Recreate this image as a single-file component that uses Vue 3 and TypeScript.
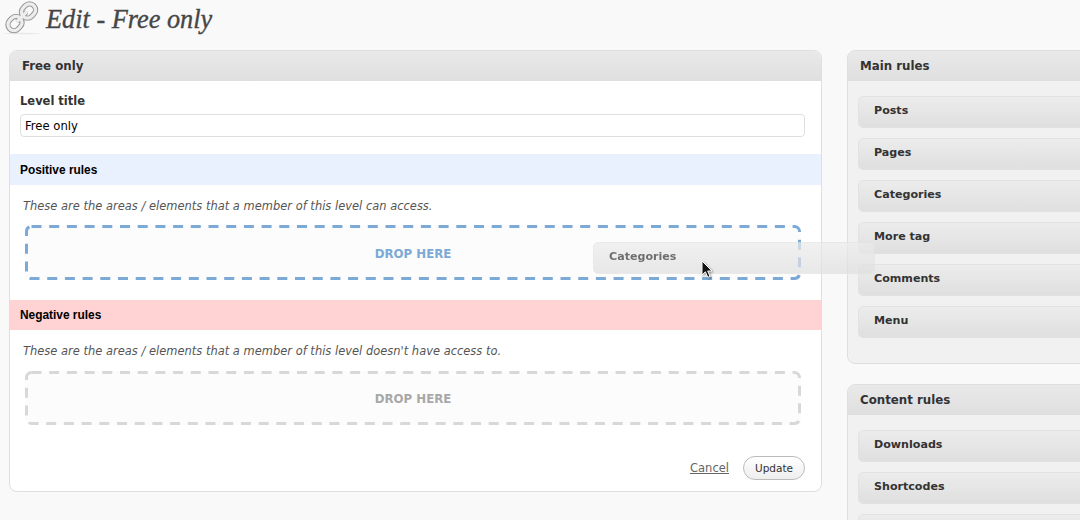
<script setup lang="ts">
interface RuleGroup {
  title: string
  rules: string[]
}

// the last content rule sits below the fold, only its top edge shows
const groups: RuleGroup[] = [
  { title: 'Main rules', rules: ['Posts', 'Pages', 'Categories', 'More tag', 'Comments', 'Menu'] },
  { title: 'Content rules', rules: ['Downloads', 'Shortcodes', ''] }
]
</script>

<template>
  <div class="page">
    <header class="page-title">
      <svg class="title-icon" width="42" height="36" viewBox="0 0 42 36" aria-hidden="true">
        <ellipse cx="18" cy="33.5" rx="18" ry="0.8" fill="#e8e8e8" />
        <g fill="none">
          <g stroke="#9a9a9a" stroke-width="5.4">
            <rect x="3.5" y="17.5" width="15" height="12" rx="6" transform="rotate(-45 11 23.5)" />
            <rect x="17" y="5" width="15" height="12" rx="6" transform="rotate(-45 24.5 11)" />
            <path d="M14.5 20 L21 13.5" stroke-linecap="round" />
          </g>
          <g stroke="#ededed" stroke-width="3.2">
            <rect x="3.5" y="17.5" width="15" height="12" rx="6" transform="rotate(-45 11 23.5)" />
            <rect x="17" y="5" width="15" height="12" rx="6" transform="rotate(-45 24.5 11)" />
            <path d="M13.5 21 L22 12.5" stroke-linecap="round" />
          </g>
        </g>
      </svg>
      <h1>Edit - Free only</h1>
    </header>

    <div class="columns">
      <main class="panel editor">
        <h2 class="panel-head">Free only</h2>

        <div class="title-field">
          <label for="level-title">Level title</label>
          <input id="level-title" type="text" value="Free only" />
        </div>

        <h3 class="rule-band positive">Positive rules</h3>
        <p class="hint">These are the areas / elements that a member of this level can access.</p>
        <div class="drop active">
          <svg class="dash" width="776" height="55" aria-hidden="true">
            <rect x="1.5" y="1.5" width="773" height="52" rx="5" />
          </svg>
          DROP HERE
        </div>

        <h3 class="rule-band negative">Negative rules</h3>
        <p class="hint">These are the areas / elements that a member of this level doesn't have access to.</p>
        <div class="drop second">
          <svg class="dash" width="776" height="54" aria-hidden="true">
            <rect x="1.5" y="1.5" width="773" height="51" rx="5" />
          </svg>
          DROP HERE
        </div>

        <div class="actions">
          <a href="#" class="cancel">Cancel</a>
          <button type="button" class="update">Update</button>
        </div>
      </main>

      <aside class="sidebar">
        <section v-for="group in groups" :key="group.title" class="panel side-panel">
          <h2 class="panel-head">{{ group.title }}</h2>
          <ul class="rule-list">
            <li v-for="rule in group.rules" :key="rule" class="rule-item">{{ rule }}</li>
          </ul>
        </section>
      </aside>
    </div>

    <!-- item being dragged -->
    <div class="dragged">Categories</div>
    <svg class="cursor" width="14" height="20" viewBox="0 0 14 20" aria-hidden="true">
      <path d="M1 1 L1 15 L4.4 11.8 L6.8 17.4 L9 16.4 L6.7 11 L11 11 Z" fill="#111" stroke="#fff" stroke-width="1" />
    </svg>
  </div>
</template>

<style>
html,
body {
  margin: 0;
  background: #f9f9f9;
  overflow: hidden;
}
</style>

<style scoped>
.page {
  position: relative;
  width: 1080px;
  height: 520px;
  overflow: hidden;
  background: #f9f9f9;
  font-family: "DejaVu Sans", "Liberation Sans", sans-serif;
  color: #333;
}

.page-title {
  display: flex;
  align-items: flex-start;
  height: 50px;
  padding-left: 4px;
  box-sizing: border-box;
}

h1 {
  margin: 0;
  padding-top: 5px;
  font: italic 400 26.3px/30px "Liberation Serif", serif;
  color: #464646;
  -webkit-text-stroke: 0.35px #464646;
}

.columns {
  display: flex;
  align-items: flex-start;
  gap: 25px;
  padding-left: 9px;
}

.panel {
  box-sizing: border-box;
  border: 1px solid #dfdfdf;
  border-radius: 8px;
  overflow: hidden;
}

.panel-head {
  margin: 0;
  height: 30px;
  padding-left: 12px;
  font-size: 11.8px;
  font-weight: 700;
  line-height: 30px;
  color: #333;
  background: linear-gradient(#e9e9e9, #dfdfdf);
}

.editor {
  flex: none;
  width: 813px;
  height: 442px;
  background: #fff;
}

.title-field {
  padding: 13px 16px 0 10px;
  height: 73px;
  box-sizing: border-box;
}

.title-field label {
  display: block;
  font-size: 11.5px;
  font-weight: 700;
  line-height: 14px;
  color: #333;
}

.title-field input {
  display: block;
  box-sizing: border-box;
  width: 100%;
  height: 23px;
  margin-top: 6px;
  padding: 1px 4px 0;
  border: 1px solid #dfdfdf;
  border-radius: 4px;
  font: 11.6px "DejaVu Sans", sans-serif;
  color: #000;
  background: #fff;
  outline: none;
}

.rule-band {
  margin: 0;
  height: 31px;
  padding-left: 10px;
  font: 700 11.9px/32px "Liberation Sans", sans-serif;
  color: #000;
}

.positive {
  background: #e9f0fe;
}

.negative {
  height: 30px;
  line-height: 31px;
  background: #ffd3d3;
}

.hint {
  margin: 0;
  padding: 14px 0 0 13px;
  font-size: 11.45px;
  font-style: italic;
  line-height: 15px;
  letter-spacing: 0.02px;
  color: #555;
}

.drop {
  position: relative;
  box-sizing: border-box;
  width: 776px;
  height: 55px;
  margin: 11px 0 20px 15px;
  border-radius: 6px;
  font-size: 11.8px;
  font-weight: 700;
  line-height: 58px;
  text-align: center;
  color: #a8a8a8;
  background: #fcfcfc;
}

.drop.second {
  height: 54px;
  margin-top: 12px;
  line-height: 57px;
}

.dash {
  position: absolute;
  left: 0;
  top: 0;
}

.dash rect {
  fill: none;
  stroke: #d8d8d8;
  stroke-width: 3;
  stroke-dasharray: 10 7.7;
}

.drop.active {
  color: #7caad6;
}

.drop.active .dash rect {
  stroke: #7caad6;
}

.actions {
  display: flex;
  align-items: center;
  justify-content: flex-end;
  gap: 14px;
  padding: 11px 16px 0 0;
}

.cancel {
  font-size: 11.5px;
  color: #666;
}

.update {
  box-sizing: border-box;
  width: 62px;
  height: 24px;
  padding: 0;
  border: 1px solid #bbb;
  border-radius: 12px;
  font: 10.5px "DejaVu Sans", sans-serif;
  color: #333;
  background: linear-gradient(#fff, #eee);
}

.sidebar {
  flex: none;
  display: flex;
  flex-direction: column;
  gap: 20px;
  width: 280px;
}

.side-panel {
  background: #f1f1f1;
}

.side-panel:first-child {
  height: 314px;
}

.rule-list {
  margin: 0;
  padding: 15px 0 0 10px;
  list-style: none;
}

.rule-item {
  box-sizing: border-box;
  height: 32px;
  margin-bottom: 10px;
  padding-left: 15px;
  border: 1px solid #e2e2e2;
  border-radius: 5px;
  font-size: 11.1px;
  font-weight: 700;
  line-height: 28px;
  color: #333;
  background: linear-gradient(#ececec, #dfdfdf);
}

.dragged {
  position: absolute;
  left: 593px;
  top: 242px;
  box-sizing: border-box;
  width: 282px;
  height: 32px;
  padding-left: 15px;
  border: 1px solid #e2e2e2;
  border-radius: 5px;
  font-size: 11.1px;
  font-weight: 700;
  line-height: 28px;
  color: #333;
  background: linear-gradient(#ececec, #dfdfdf);
  opacity: 0.7;
}

.cursor {
  position: absolute;
  left: 701px;
  top: 260px;
  filter: drop-shadow(1px 1px 1px rgba(0, 0, 0, 0.4));
}
</style>
